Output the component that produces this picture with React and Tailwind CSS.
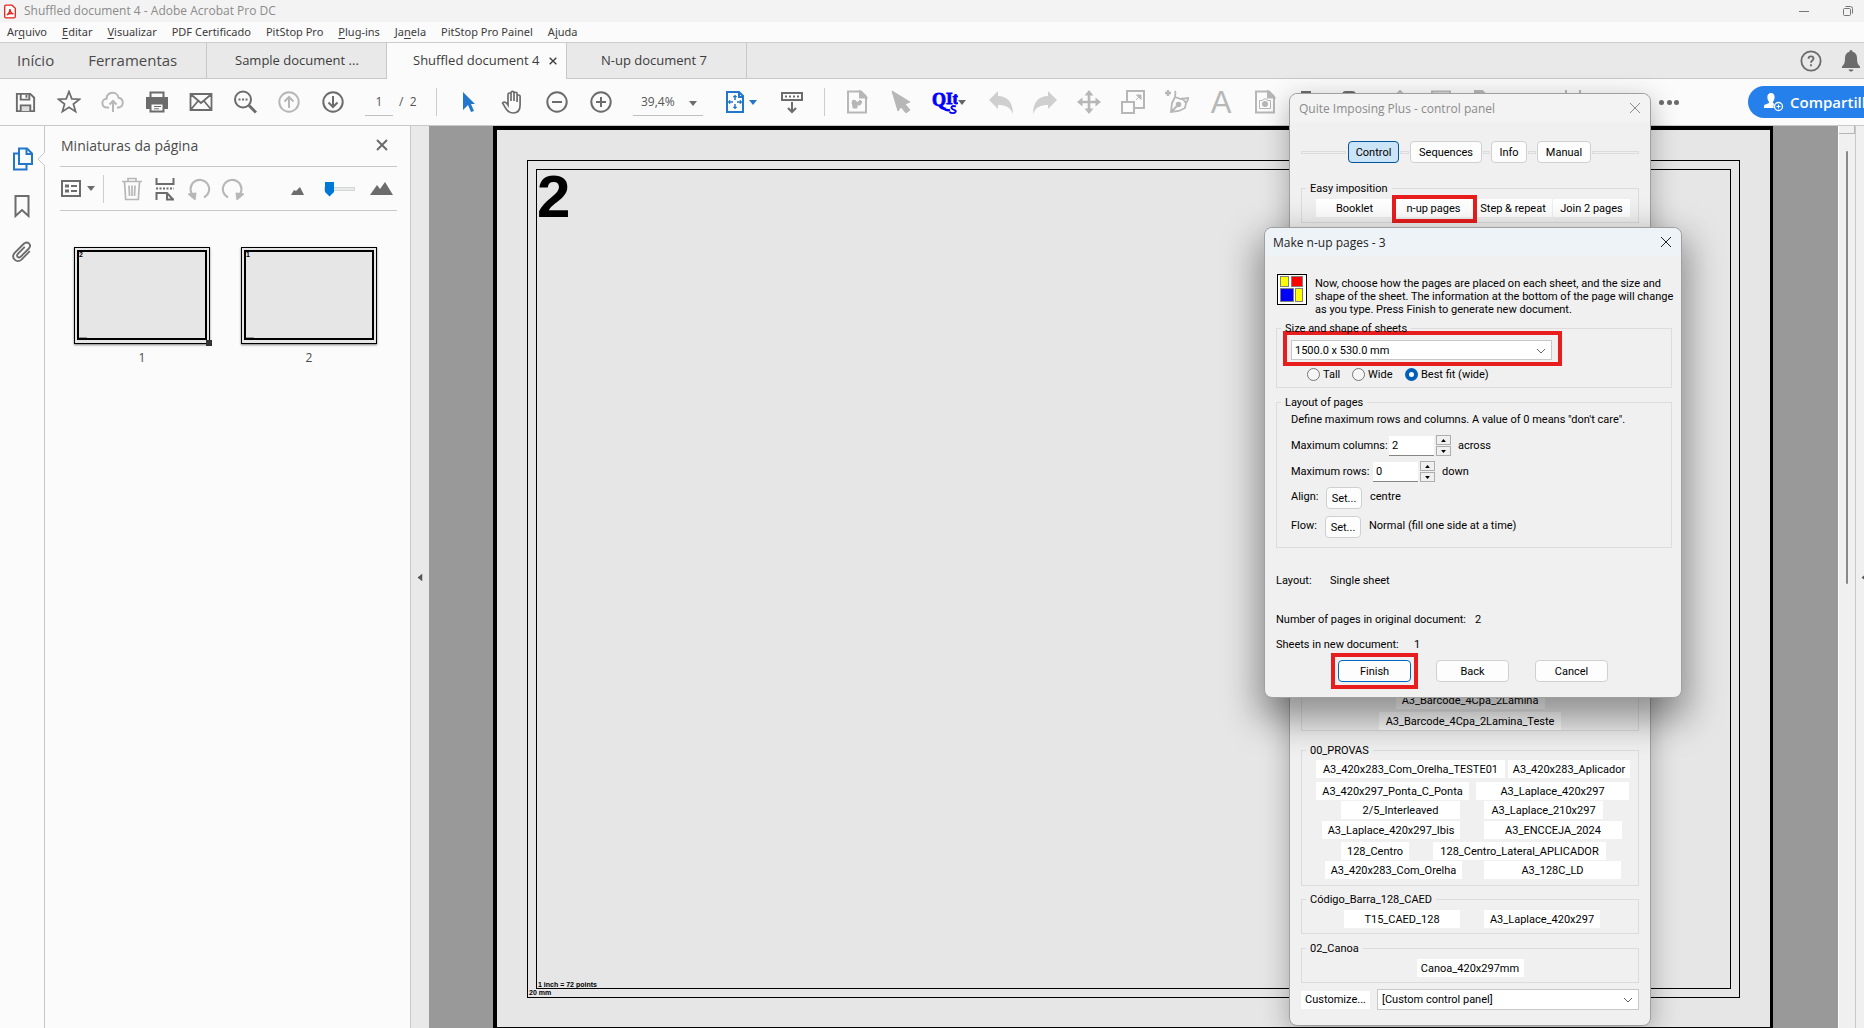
import { clsx } from 'clsx';
import { twMerge } from 'tailwind-merge';

const cn = (...args) => twMerge(clsx(args));

const ui = 'font-["Open_Sans","Noto_Sans",sans-serif]';
const menuFont = 'font-["Noto_Sans","Open_Sans",sans-serif] text-[11px]';
const titleFont = 'font-["Open_Sans","Noto_Sans",sans-serif] text-[12px]';
const dlg = 'font-[Roboto,"Liberation_Sans",sans-serif] text-[11px] leading-[13px] text-black';

const menus = [
  ['Ar', 'q', 'uivo'],
  ['', 'E', 'ditar'],
  ['', 'V', 'isualizar'],
  ['PDF Certificado', '', ''],
  ['PitStop Pro', '', ''],
  ['', 'P', 'lug-ins'],
  ['Ja', 'n', 'ela'],
  ['PitStop Pro Painel', '', ''],
  ['A', 'j', 'uda'],
];

const provas = [
  { row: 'mb-1', items: [['A3_420x283_Com_Orelha_TESTE01', 'ml-[14px] w-[189px]'], ['A3_420x283_Aplicador', 'ml-[3px] w-[122px]']] },
  { row: 'mb-px', items: [['A3_420x297_Ponta_C_Ponta', 'ml-[14px] w-[153px]'], ['A3_Laplace_420x297', 'ml-[7px] w-[153px]']] },
  { row: 'mb-[2px]', items: [['2/5_Interleaved', 'ml-[39px] w-[119px]'], ['A3_Laplace_210x297', 'ml-[24px] w-[119px]']] },
  { row: 'mb-[3px]', items: [['A3_Laplace_420x297_Ibis', 'ml-[20px] w-[138px]'], ['A3_ENCCEJA_2024', 'ml-[24px] w-[138px]']] },
  { row: 'mb-px', items: [['128_Centro', 'ml-[39px] w-[68px]'], ['128_Centro_Lateral_APLICADOR', 'ml-[24px] w-[173px]']] },
  { row: '', items: [['A3_420x283_Com_Orelha', 'ml-[23px] w-[137px]'], ['A3_128C_LD', 'ml-[22px] w-[137px]']] },
];

function Icon({ children, size = 'size-6', className, ...rest }) {
  return (
    <svg viewBox="0 0 24 24" fill="none" stroke="currentColor" strokeWidth="2" className={cn(size, 'shrink-0', className)} aria-hidden="true" {...rest}>
      {children}
    </svg>
  );
}

function Tool({ label, off, className, children }) {
  return (
    <button aria-label={label} className={cn('flex h-8 w-11 shrink-0 items-center justify-center', off ? 'text-[#b7b7b7]' : 'text-[#6c6c6c]', className)}>
      {children}
    </button>
  );
}

function Caret({ className }) {
  return <svg viewBox="0 0 8 5" className={cn('h-[5px] w-2 shrink-0', className)} aria-hidden="true"><path d="M0 0h8L4 5z" fill="currentColor" /></svg>;
}

function CloseX({ className }) {
  return <svg viewBox="0 0 12 12" className={cn('size-3', className)} stroke="currentColor" aria-hidden="true"><path d="M1 1l10 10M11 1L1 11" /></svg>;
}

function Chevron() {
  return <svg viewBox="0 0 10 6" className="pointer-events-none absolute top-2 right-1.5 h-[6px] w-[10px]" fill="none" stroke="#666" aria-hidden="true"><path d="M1 1l4 4 4-4" /></svg>;
}

function Flat({ children, className }) {
  return <button className={cn('h-[18px] shrink-0 bg-white text-center whitespace-nowrap', className)}>{children}</button>;
}

function Push({ children, className }) {
  return <button className={cn('h-[22px] shrink-0 rounded border border-[#d0d0d0] bg-[#fdfdfd] text-center', className)}>{children}</button>;
}

function Group({ title, className, children }) {
  return (
    <fieldset className={cn('min-w-0 border border-[#dcdcdc]', className)}>
      <legend className="ml-1 h-[13px] px-1">{title}</legend>
      {children}
    </fieldset>
  );
}

function Spin({ id, label, value, after, width }) {
  return (
    <div className="flex h-[21px] items-center">
      <label htmlFor={id} className={width}>{label}</label>
      <input id={id} defaultValue={value} className="h-5 w-[45px] border-b border-[#868686] bg-white px-[3px]" />
      <div className="ml-0.5 flex w-[15px] flex-col gap-px">
        <button aria-label="More" className="flex h-[10px] items-center justify-center border border-[#adadad] bg-[#f0f0f0]"><Caret className="h-[3px] w-[5px] rotate-180" /></button>
        <button aria-label="Less" className="flex h-[10px] items-center justify-center border border-[#adadad] bg-[#f0f0f0]"><Caret className="h-[3px] w-[5px]" /></button>
      </div>
      <span className="ml-[7px]">{after}</span>
    </div>
  );
}

function Header() {
  return (
    <header>
      <div className="flex h-[22px] items-center bg-[#f3f3f3] px-1 text-[#8b8b8b]">
        <svg viewBox="0 0 12 14" className="h-[15px] w-3" fill="#fff" stroke="#e2231a" strokeWidth="1.300" aria-hidden="true">
          <path d="M2 .7h6l3.300 3v8.300a1.300 1.300 0 0 1-1.300 1.300H2A1.300 1.300 0 0 1 .7 12V2A1.300 1.300 0 0 1 2 .7z" />
          <path d="M3 10.500c2-1.500 3-3.800 3-6 0 2.500 1 4 3.500 5C7 8.500 5 8.900 3 10.500z" fill="none" />
        </svg>
        <span className={cn(titleFont, 'ml-2')}>Shuffled document 4 - Adobe Acrobat Pro DC</span>
        <svg viewBox="0 0 12 12" className="ml-auto size-3" stroke="#777" aria-hidden="true"><path d="M1 6.500h10" /></svg>
        <svg viewBox="0 0 12 12" className="mr-1.5 ml-8 size-3" fill="none" stroke="#777" aria-hidden="true"><rect x="1.500" y="3.500" width="7" height="7" rx="1" /><path d="M3.500 1.500h5a2 2 0 0 1 2 2v5" /></svg>
      </div>
      <nav className={cn(menuFont, 'flex h-[21px] items-center gap-[15px] border-b border-[#cdcdcd] bg-[#fbfbfb] pl-[7px] text-[#3c3c3c]')}>
        {menus.map(([a, b, c]) => (
          <a key={a + b + c} href="#" className="whitespace-nowrap">{a}<u className="underline-offset-2">{b}</u>{c}</a>
        ))}
      </nav>
      <div className="flex h-9 items-stretch bg-[#e9e9e9] text-[#3c3c3c]">
        <div className="flex w-[207px] shrink-0 items-center gap-[34px] border-r border-b border-[#c8c8c8] pl-[17px] text-[15px] text-[#4b4b4b]">
          <a href="#">Início</a>
          <a href="#">Ferramentas</a>
        </div>
        <a href="#" className="flex w-[180px] shrink-0 items-center border-r border-b border-[#c8c8c8] pl-7 text-[13px]">Sample document ...</a>
        <div className="flex w-[180px] shrink-0 items-center border-r border-[#c8c8c8] bg-[#fbfbfb] pl-[26px] text-[13px]">
          <a href="#" className="w-[132px]">Shuffled document 4</a>
          <button aria-label="Fechar guia"><CloseX className="ml-1 size-2 stroke-2" /></button>
        </div>
        <a href="#" className="flex w-[180px] shrink-0 items-center border-r border-b border-[#c8c8c8] pl-[34px] text-[13px]">N-up document 7</a>
        <div className="flex grow items-center justify-end gap-5 border-b border-[#c8c8c8] pr-1 text-[#6c6c6c]">
          <button aria-label="Ajuda"><Icon size="size-[22px]"><circle cx="12" cy="12" r="10.500" /><path d="M9.300 9.500c0-3.400 5.400-3.400 5.400 0 0 2-2.700 2-2.700 4.300M12 15.500v2.200" /></Icon></button>
          <button aria-label="Notificações"><svg viewBox="0 0 18 22" className="h-[22px] w-[18px]" fill="currentColor" aria-hidden="true"><path d="M9 0c1 0 1.500.8 1.500 1.800C13.500 2.500 15 5 15 8c0 5 1 6.500 3 8.500V18H0v-1.500C2 14.500 3 13 3 8c0-3 1.500-5.500 4.500-6.200C7.500.8 8 0 9 0zM6.500 19.500h5C11 21 10 21.500 9 21.500s-2-.5-2.500-2z" /></svg></button>
        </div>
      </div>
    </header>
  );
}

function Toolbar() {
  return (
    <div className="flex h-[47px] shrink-0 items-center overflow-hidden border-b border-[#c8c8c8] bg-[#fbfbfb] pl-[3px] text-[13px]">
      <Tool label="Salvar"><Icon size="size-[23px]"><path d="M3 3h14l4 4v14H3z" /><path d="M7 3v6h9V3M13 4v3" /><path d="M7 21v-6h10v6" fill="#ddd" /></Icon></Tool>
      <Tool label="Favorito"><Icon strokeWidth="1.700"><path d="M12 1.500l2.800 7.400 7.800.3-6.200 4.800 2.200 7.600-6.600-4.400-6.600 4.400L7.600 14 1.400 9.200l7.800-.3z" /></Icon></Tool>
      <Tool label="Nuvem" off><Icon><path d="M8 17.500H6a4.300 4.300 0 0 1-.5-8.700C6 1 16.500 1 17.500 7.700a5 5 0 0 1 .5 9.800h-2M12 22V11M8.500 14.500L12 11l3.500 3.500" /></Icon></Tool>
      <Tool label="Imprimir"><Icon><path d="M5.500 7V2.500h13V7" /><path d="M2 8h20v10h-3v-4H5v4H2z" fill="currentColor" /><path d="M5.500 13.500h13v8h-13z" fill="#fbfbfb" /><path d="M9 16.500h7M9 18.800h5" strokeWidth="1" /></Icon></Tool>
      <Tool label="E-mail"><Icon strokeWidth="1.800"><path d="M1.500 4h21v16h-21zM1.500 4L12 13 22.500 4M1.500 20L9 11M22.500 20L15 11" /></Icon></Tool>
      <Tool label="Localizar"><Icon><circle cx="10" cy="9.500" r="8" /><path d="M16 15.500l7 7" strokeWidth="3" /><path d="M5.500 9.500h2M9 9.500h2M12.500 9.500h2" /></Icon></Tool>
      <Tool label="Página anterior" off><Icon><circle cx="12" cy="12" r="9.700" /><path d="M12 18V7M7.500 11.500L12 7l4.500 4.500" /></Icon></Tool>
      <Tool label="Próxima página"><Icon><circle cx="12" cy="12" r="9.700" /><path d="M12 6v11M7.500 12.500L12 17l4.500-4.500" /></Icon></Tool>
      <input aria-label="Página" defaultValue="1" className="ml-[10px] h-[27px] w-7 shrink-0 border-b border-[#c0c0c0] text-center text-[12px] text-[#555]" />
      <span className="ml-1.5 w-[37px] shrink-0 text-[12px] text-[#555]">/ &nbsp;2</span>
      <i className="h-7 w-px shrink-0 bg-[#cdcdcd]" />
      <Tool label="Selecionar" className="ml-[10px] text-[#2277cc]"><svg viewBox="0 0 12 20" className="h-5 w-3" fill="#2277cc" aria-hidden="true"><path d="M0 0l12 12H8l3 7-3 1-3-7-5 5z" /></svg></Tool>
      <Tool label="Mão"><Icon strokeWidth="1.700"><path d="M7 14V4.500a1.500 1.500 0 0 1 3 0V11 2.800a1.500 1.500 0 0 1 3 0V11 3.800a1.500 1.500 0 0 1 3.100 0V12 6.500a1.500 1.500 0 0 1 3 0V15c0 5-2.600 8-7 8-5 0-7-4-10.500-10 1.500-1.800 3.500-1 5.400 2z" /></Icon></Tool>
      <Tool label="Menos zoom"><Icon><circle cx="12" cy="12" r="9.700" /><path d="M7 12h10" /></Icon></Tool>
      <Tool label="Mais zoom"><Icon><circle cx="12" cy="12" r="9.700" /><path d="M7 12h10M12 7v10" /></Icon></Tool>
      <div className="relative ml-[10px] w-[70px] shrink-0">
        <select aria-label="Zoom" className="h-[27px] w-full appearance-none border-b border-[#c0c0c0] pl-2 text-[12px] text-[#555]"><option>39,4%</option></select>
        <Caret className="pointer-events-none absolute top-3 right-1.5 text-[#6c6c6c]" />
      </div>
      <button aria-label="Ajustar" className="ml-5 flex w-[47px] shrink-0 items-center gap-0.5 text-[#2277cc]">
        <Icon><path d="M4 2h12l4 4v16H4zM16 2v5h4" /><path d="M12 6v4M12 14v4M6 12h4M14 12h4" strokeWidth="1.500" /><path d="M12 5l2 2h-4zM12 19l2-2h-4zM5 12l2-2v4zM19 12l-2-2v4z" fill="currentColor" strokeWidth=".5" /></Icon>
        <Caret />
      </button>
      <Tool label="Rolagem"><Icon><path d="M2 3h20v7H2z" /><path d="M5 6.500h2M9 6.500h2M13 6.500h2M17 6.500h2M12 12v10M8 18l4 4 4-4" /></Icon></Tool>
      <i className="ml-2.5 h-7 w-px shrink-0 bg-[#cdcdcd]" />
      <Tool label="Inspecionar" off className="ml-2.5"><Icon><path d="M3 1.500h13l5 5v16H3z" /><path d="M15 1.500v6h6z" fill="currentColor" /><path d="M8 10l3 1 1 2 3-3 2 2-2 3-3 0v3H8v-2l-1-3z" fill="currentColor" strokeWidth="1" /></Icon></Tool>
      <Tool label="Selecionar objetos" off><Icon><path d="M3 1l18 11-5 2 5 6-4 3-5-6-3 4z" fill="currentColor" strokeWidth="1" /></Icon></Tool>
      <button aria-label="Quite" className="flex h-8 w-14 shrink-0 items-center pl-[9px]">
        <svg viewBox="0 0 26 26" className="size-[26px]" fill="#00f" stroke="#00f" aria-hidden="true">
          <text x="0" y="17" fontSize="18" fontWeight="bold" fontFamily="Liberation Serif, serif" strokeWidth=".8">Q</text>
          <text x="14" y="15" fontSize="17" fontWeight="bold" fontFamily="Liberation Serif, serif" strokeWidth=".8">It</text>
          <path d="M7 17c3-1 5 6 11 4" fill="none" strokeWidth="2.500" />
          <path d="M24 17.500c-4-1.500-6 1-3.500 2.500s4 1.500 3 3-4 1.500-6 0" fill="none" strokeWidth="1.800" />
        </svg>
        <Caret className="text-[#666]" />
      </button>
      <Tool label="Desfazer" off className="text-[#cfcfcf]"><Icon><path d="M0 10l9-9v5c9 0 15 6 15 18-3-7-7-9-15-9v4z" fill="currentColor" stroke="none" /></Icon></Tool>
      <Tool label="Refazer" off className="text-[#cfcfcf]"><Icon className="-scale-x-100"><path d="M0 10l9-9v5c9 0 15 6 15 18-3-7-7-9-15-9v4z" fill="currentColor" stroke="none" /></Icon></Tool>
      <Tool label="Mover" off><Icon><path d="M12 3v18M3 12h18" strokeWidth="2.600" /><path d="M12 0l4.500 5.500h-9zM12 24l4.500-5.500h-9zM0 12l5.500-4.500v9zM24 12l-5.500-4.500v9z" fill="currentColor" stroke="none" /></Icon></Tool>
      <Tool label="Escalar" off><Icon><path d="M6 12V1h17v17h-9" /><path d="M1 12h12v11H1z" /><path d="M15 10l4-4M15.500 5H20v4.500z" fill="currentColor" strokeWidth="1" /></Icon></Tool>
      <Tool label="Editar caminho" off><Icon><path d="M3 0v6M0 3h6" strokeWidth="2.400" /><path d="M10 1c1 2 0 4 0 6l-3 6-1 9 8-1 6-3 1-5 3-5-8 1-6-2M6 22l7-7M17 8l4 5" strokeWidth="1.800" /><circle cx="13.500" cy="14.500" r="1.800" fill="currentColor" /></Icon></Tool>
      <Tool label="Texto" off><span className="font-['Liberation_Sans'] text-[31px] leading-none">A</span></Tool>
      <Tool label="Instantâneo" off><Icon><path d="M3 1.500h13l5 5v16H3z" /><path d="M15 1.500v6h6z" fill="currentColor" /><path d="M6.500 10.500h3l1-1.500h3l1 1.500h3v8h-11z" strokeWidth="1" /><circle cx="12" cy="14" r="2.600" fill="currentColor" strokeWidth="1" /></Icon></Tool>
      <Tool label="Comentário"><Icon><path d="M4 2h10" /></Icon></Tool>
      <Tool label="Carimbo"><Icon><rect x="2" y="2" width="12" height="16" rx="3" /></Icon></Tool>
      <Tool label="Realçar" off><Icon><path d="M10 6l5-5 5 5" /></Icon></Tool>
      <Tool label="Editar imagem" off><Icon><path d="M3 1.500h18v20H3z" /></Icon></Tool>
      <Tool label="Editar página" off><Icon><path d="M1 1.500h8l4 4" strokeWidth="3" /></Icon></Tool>
      <Tool label="Mais" off />
      <Tool label="Alinhar" off><Icon><path d="M5 0v24M19 0v24" /></Icon></Tool>
      <button aria-label="Mais ferramentas" className="ml-auto flex w-5 shrink-0 justify-between text-[#6c6c6c]">
        <i className="size-[5px] rounded-full bg-current" /><i className="size-[5px] rounded-full bg-current" /><i className="size-[5px] rounded-full bg-current" />
      </button>
      <div className="ml-[69px] w-[116px] shrink-0">
        <button className="flex h-8 w-40 items-center rounded-full bg-[#2680eb] pl-4 text-[15px] font-semibold text-white">
          <svg viewBox="0 0 20 20" className="mr-1.5 size-5 shrink-0" aria-hidden="true">
            <path d="M7 1c5 0 4 7 1.800 9 .2 2 3 2 3.700 3V16H0v-2.500C1 12 5 12 5.200 10 3 8 2 1 7 1z" fill="#fff" />
            <circle cx="14.500" cy="14.500" r="5" fill="#2680eb" /><circle cx="14.500" cy="14.500" r="4" fill="none" stroke="#fff" strokeWidth="1.300" /><path d="M12.500 14.500h4M14.500 12.500v4" stroke="#fff" />
          </svg>
          Compartilhar
        </button>
      </div>
    </div>
  );
}

function Thumb({ mark, label, active }) {
  return (
    <figure className="w-[136px] text-center text-[12px] text-[#4b4b4b]">
      <div className="relative h-[97px] border border-black bg-[#e6e6e6] px-0.5 pt-0.5 pb-[3px] shadow-[0_1px_2px_rgba(0,0,0,0.5)]">
        <div className="flex h-full flex-col justify-between border-2 border-black text-left font-['Liberation_Sans'] text-[7px] leading-[6px] font-bold text-black">
          {mark}
          <i className="h-px w-2 bg-[#999]" />
        </div>
        {active && <i className="absolute -right-[3px] -bottom-[3px] size-1.5 bg-[#333]" />}
      </div>
      <figcaption className="mt-1.5 leading-4">{label}</figcaption>
    </figure>
  );
}

function Sidebar() {
  return (
    <>
      <div className="flex w-[45px] shrink-0 flex-col items-center gap-[23px] border-r border-[#c8c8c8] bg-[#fbfbfb] pt-[21px] text-[#6c6c6c]">
        <button aria-label="Miniaturas" className="relative text-[#2277cc]">
          <Icon><path d="M9 1.500h8l5 5V17H9z" /><path d="M16.500 1.500V7H22M9 6.500H4V22.500h12.500V17" /></Icon>
          <svg viewBox="0 0 8 14" className="absolute top-[5px] -right-[11px] h-3.5 w-2" fill="#fbfbfb" stroke="#c8c8c8" aria-hidden="true"><path d="M8 0L1 7l7 7" /></svg>
        </button>
        <button aria-label="Marcadores"><Icon><path d="M5.500 2h13v20L12 16l-6.500 6z" /></Icon></button>
        <button aria-label="Anexos"><Icon size="size-[22px]"><path d="M20.500 11l-9 9.300c-5.500 4.500-12-2-7.500-7.300L14 3c4-3.600 9 1 5.500 5.200l-9 9c-2.500 2-5.200-.8-3-3.200L15 6.500" /></Icon></button>
      </div>
      <aside className="flex w-[366px] shrink-0 flex-col border-r border-[#c8c8c8] bg-[#fbfbfb] pr-[13px] pl-[15px] text-[#4b4b4b]">
        <div className="flex h-[41px] items-center justify-between border-b border-[#c8c8c8] pr-[9px] pb-0.5 pl-px text-[14px]">
          Miniaturas da página
          <button aria-label="Fechar painel"><CloseX className="stroke-2 text-[#6c6c6c]" /></button>
        </div>
        <div className="flex h-11 items-center border-b border-[#c8c8c8] pr-1 pl-px text-[#6c6c6c]">
          <button aria-label="Opções" className="flex items-center gap-1.5">
            <svg viewBox="0 0 20 17" className="h-[17px] w-5" fill="none" stroke="currentColor" strokeWidth="2" aria-hidden="true"><path d="M1 1h18v15H1z" /><path d="M4 6h4M4 11h4" strokeWidth="3" /><path d="M10 6h6M10 11h6" /></svg>
            <Caret />
          </button>
          <i className="ml-2 h-7 w-px bg-[#cdcdcd]" />
          <button aria-label="Excluir" className="ml-4 text-[#b7b7b7]"><Icon><path d="M2 4.500h20M8 4V1.500h8V4M4.500 5l1.200 17.500h12.600L19.500 5M9 8.500l.5 10.500M12 8.500V19M15 8.500L14.500 19" strokeWidth="1.700" /></Icon></button>
          <button aria-label="Dividir" className="ml-[9px]"><Icon><path d="M3.500 1v6h17V1M3.500 23v-7H14l6 6.500M14 16v6.500h7" /><path d="M3 11.500h18" strokeDasharray="2 1.500" /></Icon></button>
          <button aria-label="Girar à esquerda" className="ml-[10px] text-[#b7b7b7]"><Icon><path d="M6.500 19A9.300 9.300 0 1 1 17 20.500" /><path d="M1 17l8-1-1 7z" fill="currentColor" strokeWidth="1" /></Icon></button>
          <button aria-label="Girar à direita" className="ml-[10px] text-[#b7b7b7]"><Icon className="-scale-x-100"><path d="M6.500 19A9.300 9.300 0 1 1 17 20.500" /><path d="M1 17l8-1-1 7z" fill="currentColor" strokeWidth="1" /></Icon></button>
          <svg viewBox="0 0 13 8" className="mt-1 ml-auto h-2 w-[13px]" fill="currentColor" aria-hidden="true"><path d="M0 8l3-5 2 1 4-4 4 8z" /></svg>
          <input type="range" min="0" max="100" defaultValue="0" aria-label="Tamanho das miniaturas" className="mr-[15px] ml-5 h-4 w-[31px] appearance-none bg-transparent [&::-webkit-slider-runnable-track]:h-1 [&::-webkit-slider-runnable-track]:border [&::-webkit-slider-runnable-track]:border-[#d6d6d6] [&::-webkit-slider-runnable-track]:bg-[#e7eaea] [&::-webkit-slider-thumb]:-mt-1.5 [&::-webkit-slider-thumb]:h-[15px] [&::-webkit-slider-thumb]:w-[9px] [&::-webkit-slider-thumb]:appearance-none [&::-webkit-slider-thumb]:bg-[#0078d7] [&::-webkit-slider-thumb]:[clip-path:polygon(0_0,100%_0,100%_70%,50%_100%,0_70%)]" />
          <svg viewBox="0 0 23 13" className="h-[13px] w-[23px]" fill="currentColor" aria-hidden="true"><path d="M0 13l7-10 3 4 5-7 8 13z" /></svg>
        </div>
        <div className="flex gap-[31px] pt-9 pl-3.5">
          <Thumb mark="2" label="1" active />
          <Thumb mark="1" label="2" />
        </div>
      </aside>
      <button aria-label="Recolher painel" className="flex w-[18px] shrink-0 items-center justify-center bg-[#e9e9e9] text-[#555]"><Caret className="rotate-90" /></button>
    </>
  );
}

function ControlPanel() {
  return (
    <section className={cn(dlg, 'absolute top-[93px] left-[1289px] flex w-[362px] flex-col rounded-lg border border-[#a0a0a0] bg-[#f0f0f0] shadow-[0_8px_28px_rgba(0,0,0,0.3)]')}>
      <div className={cn(titleFont, 'flex h-[28px] items-center justify-between rounded-t-lg bg-[#f3f3f3] pr-[9px] pl-[9px] text-[#8b8b8b]')}>
        Quite Imposing Plus - control panel
        <button aria-label="Close"><CloseX /></button>
      </div>
      <div className="px-[11px] pb-[15px]">
        <div className="mt-[19px] flex items-center gap-px">
          <i className="mr-px h-[3px] w-[45px] border border-[#dcdcdc]" />
          <Push className="w-[51px] border-[#005499] bg-[#cce4f7]">Control</Push>
          <i className="h-[3px] w-[9px] border border-[#dcdcdc]" />
          <Push className="w-[72px]">Sequences</Push>
          <i className="h-[3px] w-[7px] border border-[#dcdcdc]" />
          <Push className="w-9">Info</Push>
          <i className="h-[3px] w-[8px] border border-[#dcdcdc]" />
          <Push className="w-[54px]">Manual</Push>
          <i className="h-[3px] grow border border-[#dcdcdc]" />
        </div>
        <Group title="Easy imposition" className="mt-[19px] flex h-[41px]">
          <div className="relative flex w-full gap-px pt-1 pl-3.5">
            <Flat className="w-[77px]">Booklet</Flat>
            <Flat className="w-[79px]">n-up pages</Flat>
            <Flat className="w-[78px]">Step &amp; repeat</Flat>
            <Flat className="w-[77px]">Join 2 pages</Flat>
            <i className="absolute top-0 left-[90px] h-7 w-[85px] border-4 border-[#e81e1e]" />
          </div>
        </Group>
        <Group title="01_Barcode" className="mt-[18px] h-[490px] pt-[437px]">
          <div className="flex flex-col items-center gap-[3px]">
            <Flat className="w-[149px]">A3_Barcode_4Cpa_2Lamina</Flat>
            <Flat className="w-[182px]">A3_Barcode_4Cpa_2Lamina_Teste</Flat>
          </div>
        </Group>
        <Group title="00_PROVAS" className="mt-[13px] h-[142px]">
          <div className="pt-[3px]">
            {provas.map(({ row, items }) => (
              <div key={items[0][0]} className={cn('flex', row)}>
                {items.map(([name, pos]) => <Flat key={name} className={pos}>{name}</Flat>)}
              </div>
            ))}
          </div>
        </Group>
        <Group title="Código_Barra_128_CAED" className="mt-[7px] h-[41px]">
          <div className="flex gap-6 pt-1 pl-[42px]">
            <Flat className="w-[116px]">T15_CAED_128</Flat>
            <Flat className="w-[116px]">A3_Laplace_420x297</Flat>
          </div>
        </Group>
        <Group title="02_Canoa" className="mt-2 h-[41px]">
          <div className="flex justify-center pt-1"><Flat className="w-[107px]">Canoa_420x297mm</Flat></div>
        </Group>
        <div className="mt-1.5 flex items-center gap-[7px]">
          <Flat className="w-[69px]">Customize...</Flat>
          <div className="relative grow">
            <select aria-label="Control panel" className="h-[21px] w-full appearance-none border border-[#c8c8c8] bg-white px-1"><option>[Custom control panel]</option></select>
            <Chevron />
          </div>
        </div>
      </div>
    </section>
  );
}

function NupDialog() {
  return (
    <section className={cn(dlg, 'absolute top-[227px] left-[1264px] w-[418px] rounded-lg border border-[#a0a0a0] bg-[#f0f0f0] shadow-[0_16px_36px_6px_rgba(0,0,0,0.4)]')}>
      <div className={cn(titleFont, 'flex h-[28px] items-center justify-between rounded-t-lg bg-[#eef3f8] px-2 pr-[9px] text-[#222]')}>
        Make n-up pages - 3
        <button aria-label="Close"><CloseX /></button>
      </div>
      <div className="pr-[9px] pb-2 pl-[11px]">
        <div className="flex gap-2 pt-[18px] pl-px">
          <svg viewBox="0 0 30 31" className="h-[31px] w-[30px] shrink-0" stroke="#808080" aria-hidden="true">
            <rect x=".5" y=".5" width="29" height="30" fill="#fff" stroke="#000" />
            <rect x="3.500" y="2.500" width="8" height="10" fill="#ff0" /><rect x="14.500" y="2.500" width="11" height="10" fill="red" />
            <rect x="3.500" y="14.500" width="13" height="13" fill="#00f" /><rect x="18.500" y="14.500" width="7" height="13" fill="#ff0" />
          </svg>
          <p className="pt-[3px] whitespace-nowrap">
            Now, choose how the pages are placed on each sheet, and the size and<br />
            shape of the sheet. The information at the bottom of the page will change<br />
            as you type. Press Finish to generate new document.
          </p>
        </div>
        <Group title="Size and shape of sheets" className="mt-[6px] h-[66px]">
          <div className="-mt-1 ml-1.5 h-[35px] w-[279px] border-4 border-[#e81e1e] p-1 pt-[5px] pr-1.5">
            <div className="relative">
              <select aria-label="Sheet size" className="h-5 w-full appearance-none border border-[#c8c8c8] bg-white px-[3px]"><option>1500.0 x 530.0 mm</option></select>
              <Chevron />
            </div>
          </div>
          <div className="mt-0.5 flex items-center pl-[30px]">
            {[['Tall', 'w-[45px]'], ['Wide', 'w-[53px]'], ['Best fit (wide)', '']].map(([name, w], i) => (
              <label key={name} className={cn('flex items-center gap-[3px]', w)}>
                <input type="radio" name="shape" defaultChecked={i === 2} className="size-[13px] appearance-none rounded-full border border-[#777] bg-[#f6f6f6] checked:border-4 checked:border-[#005fb8] checked:bg-white" />
                {name}
              </label>
            ))}
          </div>
        </Group>
        <Group title="Layout of pages" className="mt-2 h-[152px]">
          <div className="pt-1 pl-3.5">
            <p className="whitespace-nowrap">Define maximum rows and columns. A value of 0 means "don't care".</p>
            <div className="mt-[9px]"><Spin id="cols" label="Maximum columns:" value="2" after="across" width="w-[98px]" /></div>
            <div className="mt-[5px]"><Spin id="rows" label="Maximum rows:" value="0" after="down" width="w-[82px]" /></div>
            <div className="mt-[5px] flex"><span className="mt-[3px] w-[35px]">Align:</span><Push className="w-9">Set...</Push><span className="mt-[3px] ml-2">centre</span></div>
            <div className="mt-[7px] flex"><span className="mt-[3px] w-[34px]">Flow:</span><Push className="w-9">Set...</Push><span className="mt-[3px] ml-2">Normal (fill one side at a time)</span></div>
          </div>
        </Group>
        <div className="mt-[26px] flex"><span className="w-[54px]">Layout:</span><span>Single sheet</span></div>
        <div className="mt-[26px] flex"><span className="w-[199px]">Number of pages in original document:</span><span>2</span></div>
        <div className="mt-3 flex"><span className="w-[138px]">Sheets in new document:</span><span>1</span></div>
        <div className="mt-[2px] flex items-center pl-[55px]">
          <div className="border-4 border-[#e81e1e] p-[3px]"><Push className="block w-[73px] border-[#0067c0]">Finish</Push></div>
          <Push className="ml-[18px] w-[73px]">Back</Push>
          <Push className="ml-[26px] w-[73px]">Cancel</Push>
        </div>
      </div>
    </section>
  );
}

export default function App() {
  return (
    <div className={cn(ui, 'relative flex h-screen flex-col overflow-hidden bg-[#fbfbfb]')}>
      <Header />
      <Toolbar />
      <div className="flex min-h-0 grow">
        <Sidebar />
        <main className="flex grow bg-[#999] pr-[65px] pl-16 font-['Liberation_Sans'] font-bold text-black">
          <div className="flex grow border-4 border-r-3 border-b border-black bg-[#e6e6e6] p-[30px] pb-[29px]">
            <div className="flex grow flex-col border border-black px-2 pt-2">
              <div className="flex grow flex-col justify-between border border-black">
                <span className="text-[60px] leading-[54px]">2</span>
                <span className="pl-px text-[7px] leading-[7px]">1 inch = 72 points</span>
              </div>
              <span className="-ml-2 pl-px text-[7px] leading-2">20 mm</span>
            </div>
          </div>
        </main>
        <div className="w-[18px] shrink-0 border-r border-l border-[#c8c8c8] border-l-white bg-[#f0f0f0]">
          <div className="h-2 border-r border-b border-[#b5b5b5]" />
          <div className="mt-[17px] ml-[7px] h-[433px] w-0.5 rounded bg-[#888]" />
        </div>
        <div className="flex w-2 shrink-0 items-center justify-end overflow-hidden bg-[#f0f0f0] text-[#555]"><Caret className="-mr-1 rotate-90" /></div>
      </div>
      <ControlPanel />
      <NupDialog />
    </div>
  );
}
